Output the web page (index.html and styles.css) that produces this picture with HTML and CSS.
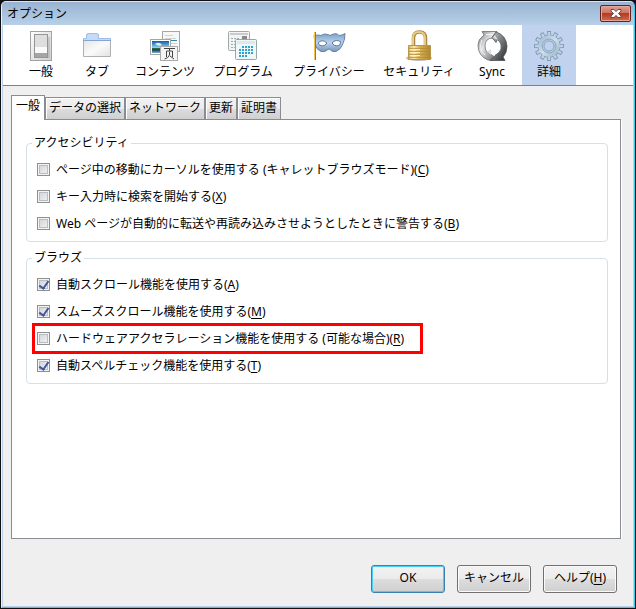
FILE: index.html
```
<!DOCTYPE html>
<html lang="ja">
<head>
<meta charset="utf-8">
<title>オプション</title>
<link rel="stylesheet" href="styles.css">
</head>
<body>
<div class="window">
  <header class="titlebar">
    <h1 class="title">オプション</h1>
    <button class="close" type="button" aria-label="閉じる">
      <svg width="12" height="9" viewBox="0 0 12 9"><path d="M1 .5h3l2 2 2-2h3v1.500L8.500 4.500 11 7v1.500H8l-2-2-2 2H1V7l2.500-2.500L1 2z" fill="#fff" stroke="#64484a"/></svg>
    </button>
  </header>
  <nav class="toolbar">
    <button class="tool" type="button">
      <svg class="icon" width="32" height="32" viewBox="0 0 32 32">
        <defs><linearGradient id="plate" x2="1" y2="1"><stop stop-color="#fff"/><stop offset="1" stop-color="#cfcfcf"/></linearGradient></defs>
        <rect x="5.500" y="1.500" width="21" height="29" fill="url(#plate)" stroke="#a2a2a2"/>
        <path d="M11 7h14v21H11z" fill="#aaa" opacity=".5"/>
        <rect x="9.500" y="4.500" width="13" height="23" fill="#dedede" stroke="#959595"/>
        <path d="M10 17h12v6H10z" fill="#fafafa"/><path d="M10 23h12v4H10z" fill="#a5a5a5"/>
      </svg>一般</button>
    <button class="tool" type="button">
      <svg class="icon" width="32" height="32" viewBox="0 0 32 32">
        <defs><linearGradient id="folder" x2="1" y2="1"><stop stop-color="#e5e5e5"/><stop offset=".5" stop-color="#fafafa"/><stop offset="1" stop-color="#e2e2e2"/></linearGradient></defs>
        <path d="M2.500 12V8.500h3v-4h1v-1h10v1h1v4h12V12z" fill="#c4dafa" stroke="#9fbde6"/>
        <path d="M2.500 10.500h27v16h-27z" fill="url(#folder)" stroke="#b0b0b0"/>
        <path d="M3 9.500h26" stroke="#c4dafa"/><path d="M2 10.500h28" stroke="#86a4d0"/>
      </svg>タブ</button>
    <button class="tool" type="button">
      <svg class="icon" width="32" height="32" viewBox="0 0 32 32">
        <defs><linearGradient id="sky" x2="0" y2="1"><stop stop-color="#1259aa"/><stop offset=".55" stop-color="#8cd2f3"/><stop offset=".6" stop-color="#386c49"/><stop offset=".75" stop-color="#173f53"/><stop offset="1" stop-color="#82b7d5"/></linearGradient></defs>
        <rect x="13.500" y="1.500" width="17" height="20" fill="#f7f7f7" stroke="#a6a6a6"/>
        <path d="M16 5.500h8M16 8.500h11M20 13.500h8" stroke="#cfd1d3"/><path d="M21 10.500h7" stroke="#378a9e"/>
        <rect x="1.500" y="9.500" width="20" height="15" fill="#fff" stroke="#a6a6a6"/>
        <path d="M3 11h17v12H3z" fill="url(#sky)"/><path d="M6 14q4-3 7 1-3 2-7-1z" fill="#d9f4ff"/>
        <rect x="11.500" y="16.500" width="17" height="14" fill="#f5f5f5" stroke="#aaa"/>
        <g fill="none" stroke="#444"><path d="M15 18.500h11M20.500 18v3M17.500 27v-6h6V27M20.500 22v3q-1 3-5 4M21 26l4 3"/></g>
      </svg>コンテンツ</button>
    <button class="tool" type="button">
      <svg class="icon" width="32" height="32" viewBox="0 0 32 32">
        <rect x="1.500" y="1.500" width="21" height="19" rx="1" fill="#f4f4f4" stroke="#a0a8a8"/>
        <path d="M3 3h18v2H3z" fill="#c8cccc"/><path d="M15 6h5v4h-5z" fill="#888"/>
        <path d="M4 8.500h9M4 11.500h5M4 14.500h5M4 17.500h5" stroke="#9bafb2" stroke-dasharray="2 1"/>
        <rect x="8.500" y="9.500" width="21" height="20" rx="1" fill="#f0f7f8" stroke="#95a7aa"/>
        <path d="M10 11h18v3H10z" fill="#dce8ea"/>
        <path d="M15 17h12M12 20h15M12 23h15M12 26h9" stroke="#2da4cc" stroke-width="2" stroke-dasharray="2 1"/>
      </svg>プログラム</button>
    <button class="tool" type="button">
      <svg class="icon" width="34" height="32" viewBox="0 0 34 32">
        <defs><linearGradient id="mask" x2="0" y2="1"><stop stop-color="#7d9fc4"/><stop offset=".5" stop-color="#b9d4ee"/><stop offset="1" stop-color="#7594b7"/></linearGradient></defs>
        <path d="M2 5.500q4-1 7 0 3-2.500 7-1l2 1 2-1q5-2 7 1 3 0 6-2 0 6-2 10-2 6-7 8-4 1-6-2-1-1-2 0-3 3-7 2-5-2-6-8z" fill="url(#mask)" stroke="#6b84a4"/>
        <path d="M6 13q4-4.500 9 0-2 3-5 3-3-.5-4-3zM20 13q4-4.500 9-1-1 4-4 4-3 0-5-3z" fill="#fff" stroke="#5b7a9c"/>
        <path d="M3 2v28" stroke="#af7410" stroke-width="2"/><path d="M2.500 2v28" stroke="#f3c653"/>
      </svg>プライバシー</button>
    <button class="tool" type="button">
      <svg class="icon" width="32" height="32" viewBox="0 0 32 32">
        <defs><linearGradient id="brass" x2="1" y2="0"><stop stop-color="#d8b45e"/><stop offset=".25" stop-color="#f9e5a8"/><stop offset=".5" stop-color="#d8b253"/><stop offset="1" stop-color="#b0842c"/></linearGradient></defs>
        <ellipse cx="16" cy="28" rx="13" ry="3" fill="#777" opacity=".5"/>
        <path d="M10.500 16V8q0-6 6-6t6 6v8" fill="none" stroke="#a88540" stroke-width="3.500"/>
        <path d="M10 16V8q0-6 6-6t6 6v8" fill="none" stroke="#e5cc89" stroke-width="2"/>
        <path d="M5.500 15.500h22v14h-22z" fill="url(#brass)" stroke="#b8954b"/>
        <path d="M6 18.500h21M6 21.500h21M6 24.500h21M6 27.500h21" stroke="#b38b3a" opacity=".7"/><path d="M7 19.500h10M7 22.500h10M7 25.500h10" stroke="#fff0b6"/>
      </svg>セキュリティ</button>
    <button class="tool" type="button">
      <svg class="icon" width="32" height="32" viewBox="0 0 32 32">
        <defs><linearGradient id="steel" x2="1" y2="1"><stop stop-color="#7b7f81"/><stop offset=".4" stop-color="#e2e4e5"/><stop offset="1" stop-color="#54585a"/></linearGradient><linearGradient id="steel-dark" x2="1" y2="1"><stop stop-color="#c4c8ca"/><stop offset=".5" stop-color="#74787a"/><stop offset="1" stop-color="#25282a"/></linearGradient></defs>
        <path d="M6 1.500h15L17 8q-8 0-8 8 0 7 7 9 2 3 7 3-5 3-11 2Q2 26 2 15 2 9 8 5z" fill="url(#steel)" stroke="#6b7072" stroke-width=".8"/>
        <path d="M20 2q10 3 11 14 0 7-4 11l2 3.500H14l5-5 4-3q3-3 2-8-1-4-4-5l-1 3-4-5z" fill="url(#steel-dark)" stroke="#4c5154" stroke-width=".8"/>
        <path d="M17 8l2-3 3 5M11 22l4-3v6" fill="#d8dadb"/>
        <path d="M10 4.500h7M6 10q-4 9 3 15" fill="none" stroke="#f1f2f2"/>
      </svg>Sync</button>
    <button class="tool selected" type="button" aria-pressed="true">
      <svg class="icon" width="32" height="32" viewBox="0 0 32 32">
        <defs><linearGradient id="gear" x2="1" y2="1"><stop stop-color="#9ab5d0"/><stop offset=".5" stop-color="#cfdfeb"/><stop offset="1" stop-color="#94b2c2"/></linearGradient></defs>
        <g stroke="#7f9bb8" stroke-width="4"><path id="teeth" d="M16 1v30M1 16h30"/><use href="#teeth" transform="rotate(30 16 16)"/><use href="#teeth" transform="rotate(60 16 16)"/></g>
        <circle cx="16" cy="16" r="11.500" fill="#7f9bb8"/>
        <g stroke="#bdd2e2" stroke-width="2.400"><path id="cogs" d="M16 2v28M2 16h28"/><use href="#cogs" transform="rotate(30 16 16)"/><use href="#cogs" transform="rotate(60 16 16)"/></g>
        <circle cx="16" cy="16" r="10.800" fill="url(#gear)"/>
        <circle cx="16" cy="16" r="7" fill="#b5cbdf" stroke="#8ba7c2"/>
        <circle cx="16" cy="16" r="5" fill="#c1d2ee" stroke="#8ba7c2"/>
      </svg>詳細</button>
  </nav>
  <main class="content">
    <div class="tabs" role="tablist">
      <button class="tab active" type="button" role="tab" aria-selected="true">一般</button>
      <button class="tab" type="button" role="tab">データの選択</button>
      <button class="tab" type="button" role="tab">ネットワーク</button>
      <button class="tab" type="button" role="tab">更新</button>
      <button class="tab" type="button" role="tab">証明書</button>
    </div>
    <section class="panel" role="tabpanel">
      <fieldset class="group">
        <legend>アクセシビリティ</legend>
        <label class="option"><input type="checkbox"><span>ページ中の移動にカーソルを使用する (キャレットブラウズモード)(<u>C</u>)</span></label>
        <label class="option"><input type="checkbox"><span>キー入力時に検索を開始する(<u>X</u>)</span></label>
        <label class="option"><input type="checkbox"><span>Web ページが自動的に転送や再読み込みさせようとしたときに警告する(<u>B</u>)</span></label>
      </fieldset>
      <fieldset class="group">
        <legend>ブラウズ</legend>
        <label class="option"><input type="checkbox" checked><span>自動スクロール機能を使用する(<u>A</u>)</span></label>
        <label class="option"><input type="checkbox" checked><span>スムーズスクロール機能を使用する(<u>M</u>)</span></label>
        <label class="option highlighted"><input type="checkbox"><span>ハードウェアアクセラレーション機能を使用する (可能な場合)(<u>R</u>)</span></label>
        <label class="option"><input type="checkbox" checked><span>自動スペルチェック機能を使用する(<u>T</u>)</span></label>
      </fieldset>
    </section>
  </main>
  <footer class="actions">
    <button class="action default" type="button">OK</button>
    <button class="action" type="button">キャンセル</button>
    <button class="action" type="button">ヘルプ(<u>H</u>)</button>
  </footer>
</div>
</body>
</html>
```
FILE: styles.css
```
* { box-sizing: border-box; }

body {
  margin: 0;
  padding: 1px;
  min-height: 100vh;
  display: flex;
  background: #101014;
  color: #000;
  font: 12px/16px "Noto Sans", "Noto Sans CJK JP", sans-serif;
}

button { font: inherit; color: inherit; margin: 0; }

u { text-underline-offset: 2px; }

.window {
  flex: 1;
  min-width: 0;
  display: flex;
  flex-direction: column;
  padding: 0 1px 1px;
  border: 1px solid #3cc8e8;
  border-top-color: #d8e4f0;
  border-left-color: #eaf3fc;
  border-radius: 5px 5px 0 0;
  background: linear-gradient(#98b4d2, #b9d1ea 24px);
}

.titlebar {
  height: 23px;
  padding: 0 2px 0 4px;
  display: flex;
  align-items: center;
  justify-content: space-between;
}

.title { margin: 0; font-size: 12px; font-weight: 400; }

.close {
  width: 31px;
  height: 17px;
  padding: 0;
  display: flex;
  align-items: center;
  justify-content: center;
  border: 1px solid #5a2428;
  border-radius: 2px;
  box-shadow: inset 0 0 0 1px #e6a798;
  background: linear-gradient(#e0a193, #cf7460 45%, #b8391f 50%, #cc6c50);
}

.toolbar {
  display: grid;
  grid-template-columns: 54px 58px 78px 78px 94px 86px 60px 54px;
  padding-left: 11px;
  background: #fff;
  border-bottom: 1px solid #808080;
}

.tool {
  height: 60px;
  padding: 5px 0 0;
  display: flex;
  flex-direction: column;
  align-items: center;
  gap: 2px;
  border: 0;
  background: none;
  white-space: nowrap;
}

.tool.selected { background: #c1d2ee; }

.icon { height: 32px; }

.content {
  flex: 1;
  display: flex;
  flex-direction: column;
  padding: 9px 12px 0 8px;
  background: #efefef;
}

.tabs { display: flex; align-items: flex-end; }

.tab {
  height: 22px;
  padding: 0 3px 2px;
  border: 1px solid #898c95;
  border-bottom: 0;
  box-shadow: inset 1px 1px #fff;
  background: linear-gradient(#f2f2f2, #ebebeb 50%, #dddddd 50%, #cfcfcf);
  white-space: nowrap;
}

.tab.active {
  height: 25px;
  margin-bottom: -1px;
  padding: 0 4px 5px;
  z-index: 1;
  background: #fff;
}

.panel {
  flex: 1;
  padding: 15px 12px 0 14px;
  border: 1px solid #898c95;
  box-shadow: 1px 1px #fff;
  background: #fff;
}

.group {
  min-width: 0;
  margin: 0 0 8px;
  padding: 8px 10px 7px;
  display: flex;
  flex-direction: column;
  align-items: flex-start;
  gap: 6px;
  border: 1px solid #d5dfe5;
  border-radius: 4px;
}

.group legend { margin-left: -5px; padding: 0 2px; }

.option {
  height: 21px;
  display: flex;
  align-items: center;
  gap: 6px;
}

.option.highlighted {
  padding-right: 14px;
  outline: 3px solid #f00;
  outline-offset: 2px;
}

.option input {
  appearance: none;
  flex: none;
  width: 13px;
  height: 13px;
  margin: 0;
  display: grid;
  place-items: center;
  border: 1px solid #8e8f8f;
  box-shadow: inset 0 0 0 1px #f4f4f4, inset 0 0 0 2px #b8bdc5;
  background: linear-gradient(135deg, #cbcfd5, #f6f6f6);
}

.option input:checked::after {
  content: "";
  width: 4px;
  height: 8px;
  margin-bottom: 2px;
  border: solid #3f559c;
  border-width: 0 2px 2px 0;
  transform: rotate(35deg);
}

.actions {
  padding: 26px 16px 13px;
  display: flex;
  justify-content: flex-end;
  gap: 12px;
  background: #efefef;
}

.action {
  width: 74px;
  height: 28px;
  padding: 0 0 2px;
  border: 1px solid #707070;
  border-radius: 3px;
  box-shadow: inset 0 0 0 1px #fafafa;
  background: linear-gradient(#f2f2f2, #ebebeb 50%, #dddddd 50%, #cfcfcf);
  white-space: nowrap;
}

.action.default {
  border-color: #3c7fb1;
  box-shadow: inset 0 0 0 1px #48d0f4;
}
```
